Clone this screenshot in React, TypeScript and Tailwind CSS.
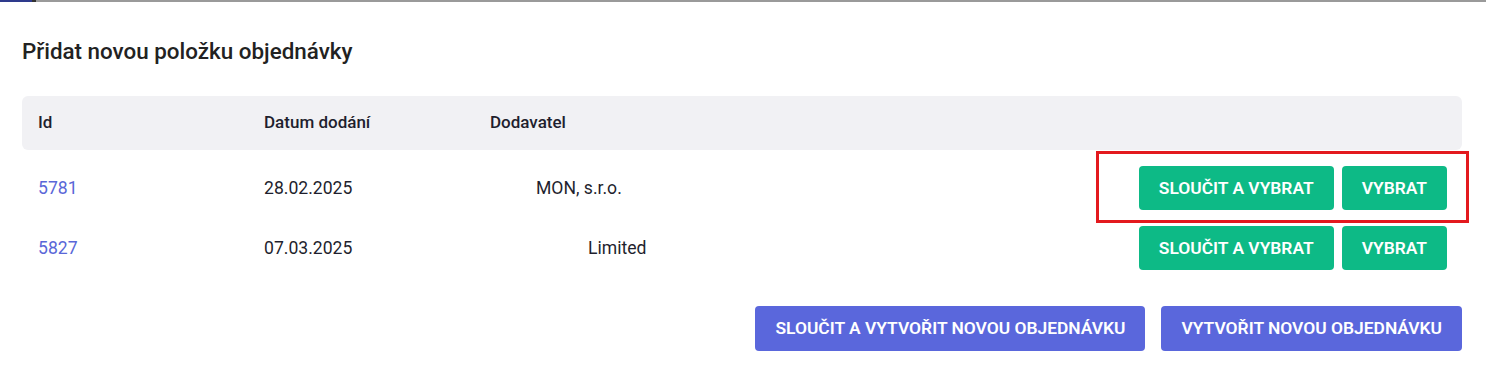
const rows = [
  { id: "5781", date: "28.02.2025", supplier: "MON, s.r.o.", indent: "pl-[46px]", marked: true },
  { id: "5827", date: "07.03.2025", supplier: "Limited", indent: "pl-[98px]", marked: false },
]

function GreenButton({ children }: { children: React.ReactNode }) {
  return (
    <button className="h-11 rounded bg-[#0dba86] px-5 text-[17.4px] font-semibold uppercase text-white">
      {children}
    </button>
  )
}

export default function App() {
  return (
    <div className="min-h-[371px] bg-white font-['Roboto',sans-serif] text-[17.6px] text-[#1f1f2e]">
      {/* tab strip */}
      <div className="flex h-[2px]">
        <div className="w-[32px] bg-[#2e3a8c]" />
        <div className="w-[4px] bg-[#333]" />
        <div className="flex-1 bg-[#9a9a9a]" />
      </div>

      <div className="pl-[22px] pr-[24px] pt-[35px]">
        <h2 className="text-[22.4px] leading-[28px] font-medium text-[#222]">Přidat novou položku objednávky</h2>

        <div className="mt-[31px]">
          <div className="grid h-[54px] grid-cols-[226px_226px_1fr] items-center rounded-md bg-[#f1f1f4] px-4 text-[17px] font-medium">
            <div>Id</div>
            <div>Datum dodání</div>
            <div>Dodavatel</div>
          </div>

          <div className="pt-2">
            {rows.map((r) => (
              <div key={r.id} className="relative flex h-[60px] items-center pl-4 pr-[15px]">
                <div className="w-[226px] shrink-0 text-[#5a67d8]">{r.id}</div>
                <div className="w-[226px] shrink-0">{r.date}</div>
                <div className={`flex-1 ${r.indent}`}>{r.supplier}</div>
                <div className="flex gap-2">
                  <GreenButton>Sloučit a vybrat</GreenButton>
                  <GreenButton>Vybrat</GreenButton>
                </div>
                {r.marked && (
                  <div className="pointer-events-none absolute right-[-7px] top-[-7px] h-[72px] w-[373px] border-[3px] border-[#e3191e]" />
                )}
              </div>
            ))}
          </div>

          <div className="mt-7 flex justify-end gap-4">
            <button className="h-[45px] rounded bg-[#5a67dc] px-5 text-[17.4px] font-semibold uppercase text-white">
              Sloučit a vytvořit novou objednávku
            </button>
            <button className="h-[45px] rounded bg-[#5a67dc] px-5 text-[17.4px] font-semibold uppercase text-white">
              Vytvořit novou objednávku
            </button>
          </div>
        </div>
      </div>
    </div>
  )
}
